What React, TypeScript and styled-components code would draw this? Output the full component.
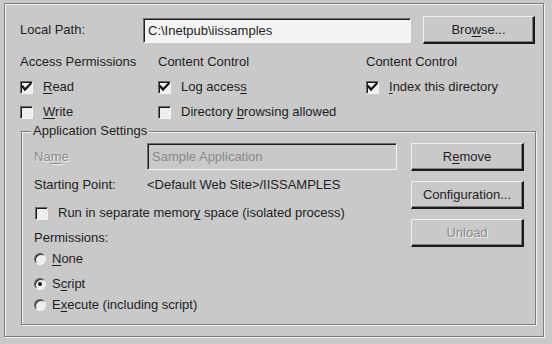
import React from 'react';
import styled, { createGlobalStyle, css } from 'styled-components';

const Global = createGlobalStyle`
  html, body { margin: 0; padding: 0; background: #c9c9c9; }
  body {
    font-family: "Liberation Sans", Arial, sans-serif;
    font-size: 13px;
    color: #1e1e1e;
  }
  * { box-sizing: border-box; }
`;

const Screen = styled.div`
  width: 552px;
  height: 344px;
  padding: 3px 8px 7px 4px;
  background: #c9c9c9;
`;

const Panel = styled.div`
  height: 100%;
  display: flex;
  flex-direction: column;
  border: 1px solid #7c7c7c;
  box-shadow: inset 1px 1px 0 #f2f2f2, 1px 1px 0 #f2f2f2;
  padding: 12px 7px 11px 15px;
`;

const PathRow = styled.div`
  display: grid;
  grid-template-columns: 123px 268px 112px;
  column-gap: 0;
  align-items: center;
  height: 28px;
`;

const Label = styled.span<{ $disabled?: boolean }>`
  line-height: 16px;
  white-space: nowrap;
  ${(p) =>
    p.$disabled &&
    css`
      color: #8a8a8a;
      text-shadow: 1px 1px 0 #efefef;
    `}
`;

const TextField = styled.div<{ $disabled?: boolean }>`
  height: ${(p) => (p.$disabled ? 27 : 25)}px;
  display: flex;
  align-items: center;
  padding: 0 4px;
  border-top: 1px solid #6e6e6e;
  border-left: 1px solid #6e6e6e;
  border-right: 1px solid #f4f4f4;
  border-bottom: 1px solid #f4f4f4;
  box-shadow: inset 1px 1px 0 #1e1e1e;
  background: ${(p) => (p.$disabled ? '#c9c9c9' : '#f3f3f3')};
  color: ${(p) => (p.$disabled ? '#8a8a8a' : '#1e1e1e')};
  white-space: nowrap;
  overflow: hidden;
`;

const Button = styled.div<{ $disabled?: boolean; $wide?: number }>`
  width: ${(p) => p.$wide ?? 113}px;
  height: 28px;
  margin-left: ${(p) => (p.$wide === 112 ? 12 : 0)}px;
  display: flex;
  align-items: center;
  justify-content: center;
  background: #c9c9c9;
  border-top: 1px solid #efefef;
  border-left: 1px solid #efefef;
  border-right: 2px solid #1a1a1a;
  border-bottom: 2px solid #1a1a1a;
  box-shadow: inset -1px -1px 0 #7e7e7e;
  white-space: nowrap;
  color: ${(p) => (p.$disabled ? '#8a8a8a' : '#1e1e1e')};
  text-shadow: ${(p) => (p.$disabled ? '1px 1px 0 #efefef' : 'none')};
`;

const Access = styled.span`
  text-decoration: underline;
  text-underline-offset: 2px;
`;

const PermGrid = styled.div`
  margin-top: 10px;
  display: grid;
  grid-template-columns: 138px 208px 1fr;
  grid-auto-rows: 16px;
  row-gap: 9px;
  align-items: center;
`;

const Check = styled.span`
  display: inline-flex;
  align-items: center;
  gap: 10px;
  line-height: 16px;
  white-space: nowrap;
`;

const Box = styled.span`
  width: 13px;
  height: 13px;
  flex: none;
  display: inline-flex;
  align-items: center;
  justify-content: center;
  border-top: 1px solid #6a6a6a;
  border-left: 1px solid #6a6a6a;
  border-right: 1px solid #f4f4f4;
  border-bottom: 1px solid #f4f4f4;
  box-shadow: inset 1px 1px 0 #1a1a1a;
  background: #eeeeee;
`;

const Radio = styled.span<{ $on?: boolean }>`
  width: 12px;
  height: 12px;
  flex: none;
  border-radius: 50%;
  display: inline-flex;
  align-items: center;
  justify-content: center;
  border: 1px solid;
  border-color: #5e5e5e #f2f2f2 #f2f2f2 #5e5e5e;
  box-shadow: inset 1px 1px 0 #2a2a2a;
  background: #eeeeee;
  &::after {
    content: '';
    width: 4px;
    height: 4px;
    border-radius: 50%;
    background: ${(p) => (p.$on ? '#1a1a1a' : 'transparent')};
  }
`;

const RadioLine = styled.span`
  display: inline-flex;
  align-items: center;
  gap: 6px;
  line-height: 16px;
  white-space: nowrap;
`;

const Group = styled.div`
  position: relative;
  flex: 1;
  margin: 11px 0 0 1px;
  border: 1px solid #7c7c7c;
  box-shadow: inset 1px 1px 0 #f2f2f2, 1px 1px 0 #f2f2f2;
  padding: 11px 10px 0 12px;
  display: flex;
`;

const Legend = styled.span`
  position: absolute;
  top: -9px;
  left: 9px;
  padding: 0 2px;
  line-height: 16px;
  background: #c9c9c9;
`;

const LeftCol = styled.div`
  width: 377px;
  display: flex;
  flex-direction: column;
`;

const RightCol = styled.div`
  width: 113px;
  display: flex;
  flex-direction: column;
  gap: 10px;
`;

const FieldRow = styled.div<{ $top?: number; $h?: number }>`
  display: grid;
  grid-template-columns: 113px 250px;
  align-items: center;
  height: ${(p) => p.$h ?? 16}px;
  margin-top: ${(p) => p.$top ?? 0}px;
`;

const Line = styled.div<{ $top?: number; $indent?: number }>`
  display: flex;
  align-items: center;
  height: 16px;
  margin-top: ${(p) => p.$top ?? 0}px;
  padding-left: ${(p) => p.$indent ?? 0}px;
`;

const CheckMark = () => (
  <svg width="11" height="11" viewBox="0 0 11 11">
    <path d="M1.5 4.5 L4 7.5 L9.5 1.8" fill="none" stroke="#151515" strokeWidth="2.2" strokeLinecap="square" />
  </svg>
);

const CheckBox = ({ on, children }: { on?: boolean; children: React.ReactNode }) => (
  <Check>
    <Box>{on && <CheckMark />}</Box>
    <span>{children}</span>
  </Check>
);

export default function App() {
  return (
    <>
      <Global />
      <Screen>
        <Panel>
          <PathRow>
            <Label>Local Path:</Label>
            <TextField>C:\Inetpub\iissamples</TextField>
            <Button $wide={112}>
              <span>
                Bro<Access>w</Access>se...
              </span>
            </Button>
          </PathRow>

          <PermGrid>
            <Label>Access Permissions</Label>
            <Label>Content Control</Label>
            <Label>Content Control</Label>

            <CheckBox on>
              <Access>R</Access>ead
            </CheckBox>
            <CheckBox on>
              Log acces<Access>s</Access>
            </CheckBox>
            <CheckBox on>
              <Access>I</Access>ndex this directory
            </CheckBox>

            <CheckBox>
              <Access>W</Access>rite
            </CheckBox>
            <CheckBox>
              Directory <Access>b</Access>rowsing allowed
            </CheckBox>
            <span />
          </PermGrid>

          <Group>
            <Legend>Application Settings</Legend>
            <LeftCol>
              <FieldRow $h={27}>
                <Label $disabled>
                  Na<Access>m</Access>e
                </Label>
                <TextField $disabled>Sample Application</TextField>
              </FieldRow>
              <FieldRow $top={7}>
                <Label>Starting Point:</Label>
                <Label>&lt;Default Web Site&gt;/IISSAMPLES</Label>
              </FieldRow>
              <Line $top={12} $indent={1}>
                <CheckBox>
                  Run in separate memor<Access>y</Access> space (isolated process)
                </CheckBox>
              </Line>
              <Line $top={9}>
                <Label>Permissions:</Label>
              </Line>
              <Line $top={5}>
                <RadioLine>
                  <Radio />
                  <span>
                    <Access>N</Access>one
                  </span>
                </RadioLine>
              </Line>
              <Line $top={9}>
                <RadioLine>
                  <Radio $on />
                  <span>
                    S<Access>c</Access>ript
                  </span>
                </RadioLine>
              </Line>
              <Line $top={5}>
                <RadioLine>
                  <Radio />
                  <span>
                    E<Access>x</Access>ecute (including script)
                  </span>
                </RadioLine>
              </Line>
            </LeftCol>
            <RightCol>
              <Button>
                <span>
                  R<Access>e</Access>move
                </span>
              </Button>
              <Button>
                <span>
                  Confi<Access>g</Access>uration...
                </span>
              </Button>
              <Button $disabled>
                <span>Unload</span>
              </Button>
            </RightCol>
          </Group>
        </Panel>
      </Screen>
    </>
  );
}
